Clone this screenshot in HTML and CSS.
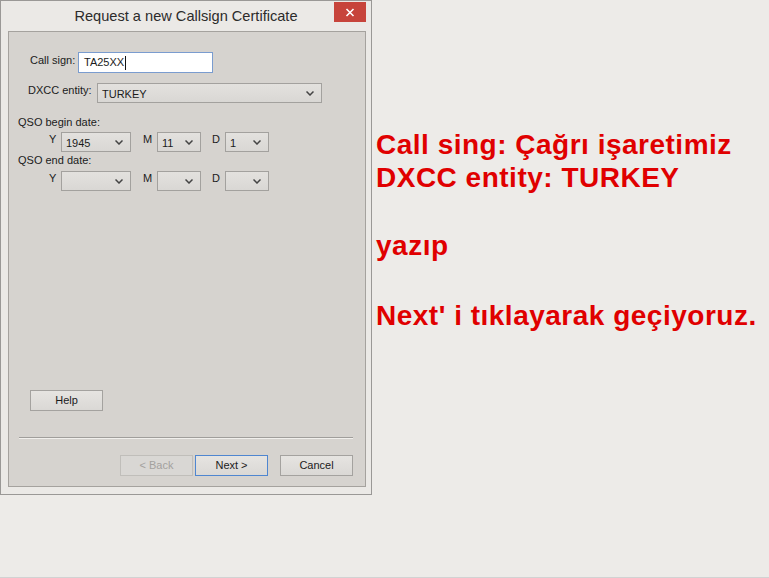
FILE: index.html
```html
<!DOCTYPE html>
<html lang="tr">
<head>
<meta charset="utf-8">
<title>Request a new Callsign Certificate</title>
<link rel="stylesheet" href="styles.css">
</head>
<body>
<div class="page">
  <div class="dialog">
    <div class="titlebar">
      <span class="title">Request a new Callsign Certificate</span>
      <button class="close" aria-label="Close">
        <svg width="10" height="9" viewBox="0 0 10 9"><path d="M1.5 1 L8.5 8 M8.5 1 L1.5 8" stroke="#fff" stroke-width="1.6" fill="none"/></svg>
      </button>
    </div>
    <div class="panel">
      <div class="row row-call">
        <span class="lbl lbl-call">Call sign:</span>
        <div class="textbox">TA25XX<span class="caret"></span></div>
      </div>
      <div class="row row-dxcc">
        <span class="lbl lbl-dxcc">DXCC entity:</span>
        <div class="combo combo-dxcc"><span class="val">TURKEY</span><svg class="chev" width="8" height="5" viewBox="0 0 8 5"><path d="M0.5 0.5 L4 4 L7.5 0.5" stroke="#444" stroke-width="1.5" fill="none"/></svg></div>
      </div>
      <div class="section sec-begin">QSO begin date:</div>
      <div class="date-row dr-begin">
        <span class="dl dl-y">Y</span>
        <div class="combo combo-y"><span class="val">1945</span><svg class="chev" width="8" height="5" viewBox="0 0 8 5"><path d="M0.5 0.5 L4 4 L7.5 0.5" stroke="#444" stroke-width="1.5" fill="none"/></svg></div>
        <span class="dl dl-m">M</span>
        <div class="combo combo-md"><span class="val">11</span><svg class="chev" width="8" height="5" viewBox="0 0 8 5"><path d="M0.5 0.5 L4 4 L7.5 0.5" stroke="#444" stroke-width="1.5" fill="none"/></svg></div>
        <span class="dl dl-d">D</span>
        <div class="combo combo-md"><span class="val">1</span><svg class="chev" width="8" height="5" viewBox="0 0 8 5"><path d="M0.5 0.5 L4 4 L7.5 0.5" stroke="#444" stroke-width="1.5" fill="none"/></svg></div>
      </div>
      <div class="section sec-end">QSO end date:</div>
      <div class="date-row dr-end">
        <span class="dl dl-y">Y</span>
        <div class="combo combo-y"><span class="val"></span><svg class="chev" width="8" height="5" viewBox="0 0 8 5"><path d="M0.5 0.5 L4 4 L7.5 0.5" stroke="#444" stroke-width="1.5" fill="none"/></svg></div>
        <span class="dl dl-m">M</span>
        <div class="combo combo-md"><span class="val"></span><svg class="chev" width="8" height="5" viewBox="0 0 8 5"><path d="M0.5 0.5 L4 4 L7.5 0.5" stroke="#444" stroke-width="1.5" fill="none"/></svg></div>
        <span class="dl dl-d">D</span>
        <div class="combo combo-md"><span class="val"></span><svg class="chev" width="8" height="5" viewBox="0 0 8 5"><path d="M0.5 0.5 L4 4 L7.5 0.5" stroke="#444" stroke-width="1.5" fill="none"/></svg></div>
      </div>
      <button class="btn btn-help">Help</button>
      <div class="separator"></div>
      <div class="nav">
        <button class="btn btn-back" disabled>&lt; Back</button>
        <button class="btn btn-next">Next &gt;</button>
        <button class="btn btn-cancel">Cancel</button>
      </div>
    </div>
  </div>
  <div class="notes">
    <p class="note note-1">Call sing: Çağrı işaretimiz<br>DXCC entity: TURKEY</p>
    <p class="note note-2">yazıp</p>
    <p class="note note-3">Next' i tıklayarak geçiyoruz.</p>
  </div>
</div>
</body>
</html>
```

FILE: styles.css
```css
* { box-sizing: border-box; }

html, body {
  margin: 0;
  padding: 0;
  background: #edebe8;
}

.page {
  display: flex;
  align-items: flex-start;
  width: 769px;
  height: 578px;
  background: #edebe8;
  border-bottom: 1px solid #d2d2d2;
  font-family: "Liberation Sans", Arial, sans-serif;
}

/* ---------- dialog ---------- */
.dialog {
  width: 372px;
  height: 495px;
  flex: none;
  border: 1px solid #9a9896;
  background: #ebe9e6;
  display: flex;
  flex-direction: column;
}

.titlebar {
  height: 30px;
  display: grid;
  grid-template-columns: 1fr auto 1fr;
  align-items: start;
}

.title {
  grid-column: 2;
  margin-top: 6px;
  font-size: 14.6px;
  line-height: 18px;
  color: #2b2b2b;
  white-space: nowrap;
}

.close {
  grid-column: 3;
  justify-self: end;
  margin: 1px 5px 0 0;
  width: 32px;
  height: 20px;
  border: 0;
  padding: 0;
  background: #c7443b;
  display: flex;
  align-items: center;
  justify-content: center;
}

.panel {
  margin-left: 7px;
  width: 358px;
  height: 456px;
  border: 1px solid #a5a29e;
  background: #d6d3cf;
  display: flex;
  flex-direction: column;
  align-items: flex-start;
  font-size: 11px;
  color: #1b1b1b;
}

.row {
  display: flex;
  align-items: flex-start;
}

.lbl {
  line-height: 13px;
  margin-top: 2px;
}

.row-call { margin-top: 20px; }
.lbl-call { width: 48px; margin-left: 21px; }

.textbox {
  width: 135px;
  height: 21px;
  border: 1px solid #7a9ccf;
  background: #fff;
  padding-left: 5px;
  line-height: 19px;
  display: flex;
  align-items: center;
}

.caret {
  display: inline-block;
  width: 1px;
  height: 14px;
  background: #111;
  margin-left: 1px;
}

.row-dxcc { margin-top: 10px; }
.lbl-dxcc { width: 69px; margin-left: 19px; margin-top: 1px; }

.combo {
  height: 20px;
  border: 1px solid #a3a19e;
  background: linear-gradient(#e3e1de, #d9d7d4);
  display: flex;
  align-items: center;
  justify-content: space-between;
  padding: 2px 7px 0 4px;
}

.combo .val { line-height: 14px; }
.combo .chev { flex: none; margin-top: -1px; }

.combo-dxcc { width: 225px; }

.section {
  margin-left: 9px;
  line-height: 14px;
}
.sec-begin { margin-top: 12px; }
.sec-end { margin-top: 1px; }

.date-row {
  display: flex;
  align-items: flex-start;
}
.dr-begin { margin-top: 3px; }
.dr-end { margin-top: 4px; }

.dl {
  line-height: 13px;
  margin-top: 1px;
}
.dl-y { margin-left: 40px; width: 12px; }
.dl-m { margin-left: 12px; width: 14px; }
.dl-d { margin-left: 11px; width: 13px; }

.combo-y { width: 70px; }
.combo-md { width: 44px; }

/* ---------- buttons ---------- */
.btn {
  width: 73px;
  height: 21px;
  border: 1px solid #a4a29f;
  background: linear-gradient(#e6e4e1, #dad8d5);
  font-family: "Liberation Sans", Arial, sans-serif;
  font-size: 11px;
  color: #1b1b1b;
  padding: 0;
  line-height: 19px;
}

.btn-help {
  margin-top: 199px;
  margin-left: 21px;
}

.separator {
  margin-top: 26px;
  margin-left: 10px;
  width: 334px;
  height: 2px;
  border-top: 1px solid #a09e9b;
  border-bottom: 1px solid #f1efec;
}

.nav {
  margin-top: 16px;
  margin-left: 111px;
  display: flex;
}

.btn-back {
  color: #a3a19e;
  border-color: #c0beba;
  background: #d9d7d4;
}
.btn-next {
  margin-left: 2px;
  border-color: #4f86d0;
}
.btn-cancel { margin-left: 12px; }

/* ---------- notes ---------- */
.notes {
  margin-left: 4px;
  padding-top: 128px;
}

.note {
  margin: 0;
  font-family: "Liberation Sans", Arial, sans-serif;
  font-weight: bold;
  font-size: 28px;
  letter-spacing: 0.5px;
  line-height: 33px;
  color: #e00000;
  white-space: nowrap;
}
.note-2 { margin-top: 35px; }
.note-3 { margin-top: 37px; }
```
